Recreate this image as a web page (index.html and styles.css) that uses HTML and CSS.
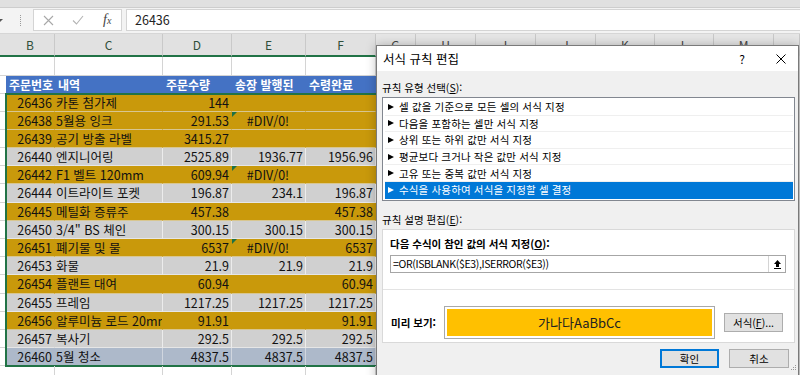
FILE: index.html
```html
<!DOCTYPE html>
<html lang="ko">

<head>
    <meta charset="UTF-8">
    <title>서식 규칙 편집</title>
    <link rel="stylesheet" href="styles.css">
</head>

<body>
    <div class="top-strip"></div>
    <div class="formula-bar">
        <span class="name-arrow"></span>
        <span class="grip"></span>
        <div class="fx-box">
            <svg class="fx-cancel" width="11" height="11" viewBox="0 0 11 11"><path d="M1 1l9 9M10 1l-9 9" stroke="#a8a8a8" stroke-width="1.1" fill="none"/></svg>
            <svg class="fx-enter" width="12" height="10" viewBox="0 0 12 10"><path d="M1 5.5l3.5 3.5L11 1" stroke="#b4b4b4" stroke-width="1.1" fill="none"/></svg>
            <span class="fx-label"><i>f</i><i class="sub">x</i></span>
        </div>
        <div class="formula-input">26436</div>
    </div>

    <!-- column letters -->
    <div class="col-heads">
        <div class="ch sel"></div>
        <div class="ch sel">B</div>
        <div class="ch sel">C</div>
        <div class="ch sel">D</div>
        <div class="ch sel">E</div>
        <div class="ch sel">F</div>
        <div class="ch">G</div>
        <div class="ch">H</div>
        <div class="ch">I</div>
        <div class="ch">J</div>
        <div class="ch">K</div>
        <div class="ch">L</div>
        <div class="ch">M</div>
        <div class="ch"></div>
    </div>

    <div class="sheet">
        <div class="row blank tall">
            <div class="c a"></div><div class="c"></div><div class="c"></div><div class="c"></div><div class="c"></div><div class="c"></div><div class="c"></div>
        </div>
        <div class="row head">
            <div class="c a"></div><div class="c">주문번호</div><div class="c">내역</div><div class="c">주문수량</div><div class="c">송장 발행된</div><div class="c">수령완료</div><div class="c"></div>
        </div>
        <div class="range">
            <div class="row gold">
                <div class="c a"></div><div class="c num active">26436</div><div class="c">카톤 첨가제</div><div class="c num">144</div><div class="c"></div><div class="c"></div><div class="c"></div>
            </div>
            <div class="row gold">
                <div class="c a"></div><div class="c num">26438</div><div class="c">5월용 잉크</div><div class="c num">291.53</div><div class="c err">#DIV/0!</div><div class="c"></div><div class="c"></div>
            </div>
            <div class="row gold">
                <div class="c a"></div><div class="c num">26439</div><div class="c">공기 방출 라벨</div><div class="c num">3415.27</div><div class="c"></div><div class="c"></div><div class="c"></div>
            </div>
            <div class="row gray">
                <div class="c a"></div><div class="c num">26440</div><div class="c">엔지니어링</div><div class="c num">2525.89</div><div class="c num">1936.77</div><div class="c num">1956.96</div><div class="c"></div>
            </div>
            <div class="row gold">
                <div class="c a"></div><div class="c num">26442</div><div class="c">F1 벨트 120mm</div><div class="c num">609.94</div><div class="c err">#DIV/0!</div><div class="c"></div><div class="c"></div>
            </div>
            <div class="row gray">
                <div class="c a"></div><div class="c num">26444</div><div class="c">이트라이트 포켓</div><div class="c num">196.87</div><div class="c num">234.1</div><div class="c num">196.87</div><div class="c"></div>
            </div>
            <div class="row gold">
                <div class="c a"></div><div class="c num">26445</div><div class="c">메틸화 증류주</div><div class="c num">457.38</div><div class="c"></div><div class="c num">457.38</div><div class="c"></div>
            </div>
            <div class="row gray">
                <div class="c a"></div><div class="c num">26450</div><div class="c">3/4" BS 체인</div><div class="c num">300.15</div><div class="c num">300.15</div><div class="c num">300.15</div><div class="c"></div>
            </div>
            <div class="row gold">
                <div class="c a"></div><div class="c num">26451</div><div class="c">폐기물 및 물</div><div class="c num">6537</div><div class="c err">#DIV/0!</div><div class="c num">6537</div><div class="c"></div>
            </div>
            <div class="row gray">
                <div class="c a"></div><div class="c num">26453</div><div class="c">화물</div><div class="c num">21.9</div><div class="c num">21.9</div><div class="c num">21.9</div><div class="c"></div>
            </div>
            <div class="row gold">
                <div class="c a"></div><div class="c num">26454</div><div class="c">플랜트 대여</div><div class="c num">60.94</div><div class="c"></div><div class="c num">60.94</div><div class="c"></div>
            </div>
            <div class="row gray">
                <div class="c a"></div><div class="c num">26455</div><div class="c">프레임</div><div class="c num">1217.25</div><div class="c num">1217.25</div><div class="c num">1217.25</div><div class="c"></div>
            </div>
            <div class="row gold">
                <div class="c a"></div><div class="c num">26456</div><div class="c">알루미늄 로드 20mm</div><div class="c num">91.91</div><div class="c"></div><div class="c num">91.91</div><div class="c"></div>
            </div>
            <div class="row gray">
                <div class="c a"></div><div class="c num">26457</div><div class="c">복사기</div><div class="c num">292.5</div><div class="c num">292.5</div><div class="c num">292.5</div><div class="c"></div>
            </div>
            <div class="row total">
                <div class="c a"></div><div class="c num">26460</div><div class="c">5월 청소</div><div class="c num">4837.5</div><div class="c num">4837.5</div><div class="c num">4837.5</div><div class="c"></div>
            </div>
        </div>
        <div class="row blank">
            <div class="c a"></div><div class="c"></div><div class="c"></div><div class="c"></div><div class="c"></div><div class="c"></div><div class="c"></div>
        </div>
    </div>

    <!-- conditional formatting dialog -->
    <div class="dialog">
        <div class="dlg-title">
            <span class="dlg-name">서식 규칙 편집</span>
            <span class="dlg-help">?</span>
            <svg class="dlg-close" width="10" height="10" viewBox="0 0 10 10"><path d="M0.5 0.5l9 9M9.5 0.5l-9 9" stroke="#000" stroke-width="1" fill="none"/></svg>
        </div>
        <div class="dlg-body">
            <div class="label">규칙 유형 선택(<u>S</u>):</div>
            <ul class="rule-list">
                <li><span class="tri"></span>셀 값을 기준으로 모든 셀의 서식 지정</li>
                <li><span class="tri"></span>다음을 포함하는 셀만 서식 지정</li>
                <li><span class="tri"></span>상위 또는 하위 값만 서식 지정</li>
                <li><span class="tri"></span>평균보다 크거나 작은 값만 서식 지정</li>
                <li><span class="tri"></span>고유 또는 중복 값만 서식 지정</li>
                <li class="selected"><span class="tri"></span>수식을 사용하여 서식을 지정할 셀 결정</li>
            </ul>
            <div class="label second">규칙 설명 편집(<u>E</u>):</div>
            <div class="desc">
                <div class="desc-top">
                    <div class="desc-label">다음 수식이 참인 값의 서식 지정(<u>O</u>):</div>
                    <div class="formula-box">
                        <span class="formula-text">=OR(ISBLANK($E3),ISERROR($E3))</span>
                        <span class="ref-btn">
                            <svg width="7" height="9" viewBox="0 0 7 9"><path d="M3.5 0L7 4H5V7H2V4H0Z" fill="#000"/><rect x="0" y="8" width="7" height="1" fill="#000"/></svg>
                        </span>
                    </div>
                </div>
                <div class="desc-bottom">
                    <span class="preview-label">미리 보기:</span>
                    <div class="preview"><span>가나다AaBbCc</span></div>
                    <button class="btn format-btn">서식(<u>F</u>)...</button>
                </div>
            </div>
            <div class="dlg-buttons">
                <button class="btn default">확인</button>
                <button class="btn cancel">취소</button>
            </div>
        </div>
        <svg class="resize-grip" width="7" height="7" viewBox="0 0 7 7">
            <rect x="5" y="1" width="1" height="1" fill="#999"/>
            <rect x="3" y="3" width="1" height="1" fill="#999"/><rect x="5" y="3" width="1" height="1" fill="#999"/>
            <rect x="1" y="5" width="1" height="1" fill="#999"/><rect x="3" y="5" width="1" height="1" fill="#999"/><rect x="5" y="5" width="1" height="1" fill="#999"/>
        </svg>
    </div>
</body>

</html>
```

FILE: styles.css
```css
* {
    box-sizing: border-box;
}

body {
    margin: 0;
    width: 800px;
    height: 375px;
    overflow: hidden;
    position: relative;
    background: #fff;
    font-family: "Noto Sans CJK KR", "Liberation Sans", sans-serif;
    color: #000;
}

/* formula bar */
.top-strip {
    height: 8px;
    background: #e0e0e0;
    border-bottom: 1px solid #cdcdcd;
}

.formula-bar {
    height: 26px;
    background: #f3f3f3;
    border-bottom: 1px solid #d6d6d6;
    display: flex;
    align-items: flex-start;
    padding-top: 1px;
}

.name-arrow {
    width: 0;
    height: 0;
    margin: 10px 0 0 -3px;
    border-left: 3px solid transparent;
    border-right: 3px solid transparent;
    border-top: 3px solid #555;
}

.grip {
    width: 1px;
    height: 11px;
    margin: 6px 0 0 17px;
    border-left: 1px dotted #9a9a9a;
}

.fx-box {
    width: 89px;
    height: 22px;
    margin-left: 12px;
    background: #fff;
    border: 1px solid #d4d4d4;
    display: flex;
    align-items: center;
}

.fx-cancel {
    margin-left: 9px;
}

.fx-enter {
    margin-left: 18px;
}

.fx-label {
    margin-left: 19px;
    font-family: "Liberation Serif", serif;
    font-size: 14px;
    color: #444;
}

.fx-label .sub {
    font-size: 10px;
}

.formula-input {
    flex: 1;
    height: 22px;
    margin-left: 4px;
    background: #fff;
    border: 1px solid #d4d4d4;
    border-right: none;
    padding-left: 8px;
    font-size: 12.5px;
    line-height: 20px;
    color: #222;
}

/* sheet */
.col-heads {
    display: grid;
    grid-template-columns: 6px 49px 108px 69px 74px 70px 40px 60px 60px 60px 59px 59px 60px 1fr;
    height: 23px;
    background: #e6e6e6;
}

.ch {
    border-right: 1px solid #c9c9c9;
    border-bottom: 2px solid #d4d4d4;
    text-align: center;
    font-size: 12px;
    line-height: 21px;
    color: #444;
}

.ch.sel {
    background: #e1e1e1;
    border-bottom-color: #217346;
    color: #2f4f3b;
}

.ch:first-child {
    border-right: none;
}

.row {
    display: grid;
    grid-template-columns: 6px 49px 108px 69px 74px 70px 1fr;
    height: 18.2px;
}

.row.tall {
    height: 18.5px;
}

.row.head {
    height: 18px;
}

.c {
    position: relative;
    border-right: 1px solid #d4d4d4;
    border-bottom: 1px solid #d4d4d4;
    padding: 0 2px 0 1px;
    font-size: 12.5px;
    line-height: 17px;
    white-space: nowrap;
    overflow: hidden;
    color: #111;
}

.c.a {
    border-right: none;
}

.num {
    text-align: right;
}

.err {
    text-align: center;
    overflow: visible;
}

/* error indicator */
.err::before {
    content: "";
    position: absolute;
    left: 0;
    top: 0;
    border-top: 5px solid #1e7145;
    border-right: 5px solid transparent;
}

.head .c:not(.a):not(:last-child) {
    background: #4472c4;
    border-right-color: transparent;
    border-bottom-color: #4472c4;
    color: #fff;
    font-weight: bold;
    font-size: 12px;
    padding-left: 3px;
}

.gold .c:not(.a):not(:last-child) {
    background: #c9990b;
    border-right-color: transparent;
    border-bottom-color: #d8c690;
}

.gold .c.active {
    background: #ffc000;
}

.gray .c:not(.a):not(:last-child),
.total .c:not(.a):not(:last-child) {
    background: #d0d0d0;
    border-right-color: #ececec;
    border-bottom-color: #e6e6e6;
}

.total .c:not(.a):not(:last-child) {
    background: #adb9ca;
    border-right-color: #d0d6df;
}

.gray .c:nth-child(2),
.total .c:nth-child(2) {
    border-right-color: transparent !important;
}

.range {
    position: relative;
}

/* selection border */
.range::after {
    content: "";
    position: absolute;
    left: 5px;
    top: -1px;
    bottom: -1px;
    width: 373px;
    border: 2px solid #217346;
    pointer-events: none;
}

/* dialog */
.dialog {
    position: absolute;
    left: 376px;
    top: 45px;
    width: 423px;
    height: 340px;
    background: #f0f0f0;
    border: 1px solid #7a7a7a;
    box-shadow: 0 0 10px rgba(0, 0, 0, 0.25);
    font-size: 10.5px;
}

.dlg-title {
    height: 25px;
    background: #fff;
    display: flex;
    align-items: center;
    padding-left: 6px;
    font-size: 12.5px;
}

.dlg-name {
    flex: 1;
}

.dlg-help {
    width: 12px;
    text-align: center;
    font-size: 12px;
    margin-right: 28px;
}

.dlg-close {
    margin-right: 12px;
}

.dlg-body {
    padding: 9px 3px 0 5px;
}

.label {
    height: 16px;
    line-height: 16px;
}

.label.second {
    margin-top: 11px;
}

.rule-list {
    margin: 1px 0 0;
    padding: 1px 1px 0 2px;
    list-style: none;
    height: 104px;
    background: #fff;
    border: 1px solid #828790;
}

.rule-list li {
    height: 16.6px;
    display: flex;
    align-items: center;
    padding-left: 3px;
    border-bottom: 1px solid #efefef;
    letter-spacing: 0.15px;
}

.rule-list li.selected {
    background: #0078d7;
    color: #fff;
    border-bottom-color: #0078d7;
}

.tri {
    width: 0;
    height: 0;
    margin-right: 5px;
    border-left: 6px solid #000;
    border-top: 3.5px solid transparent;
    border-bottom: 3.5px solid transparent;
}

.selected .tri {
    border-left-color: #fff;
}

.desc {
    margin-top: 1px;
    height: 114px;
    background: #fff;
    border: 1px solid #d9d9d9;
}

.desc-top {
    height: 60px;
    padding: 6px 8px 0 7px;
    border-bottom: 1px solid #e3e3e3;
}

.desc-label {
    height: 16px;
    line-height: 16px;
    font-weight: bold;
}

.formula-box {
    margin-top: 3px;
    height: 18px;
    display: flex;
    border: 1px solid #a6a6a6;
}

.formula-text {
    flex: 1;
    padding-left: 2px;
    line-height: 16px;
    letter-spacing: -0.35px;
}

.ref-btn {
    width: 17px;
    display: flex;
    align-items: center;
    justify-content: center;
    border-left: 1px solid #d4d4d4;
}

.desc-bottom {
    height: 53px;
    display: flex;
    align-items: center;
    padding: 12px 0 0 8px;
}

.preview-label {
    width: 53px;
    font-weight: bold;
}

.preview {
    width: 271px;
    height: 33px;
    padding: 2px;
    background: #fff;
    border: 1px solid #a9a9a9;
}

.preview span {
    height: 100%;
    display: flex;
    align-items: center;
    justify-content: center;
    background: #ffc000;
    font-size: 13px;
    color: #222;
}

.btn {
    height: 19px;
    padding: 0;
    background: #e1e1e1;
    border: 1px solid #adadad;
    font-family: inherit;
    font-size: 10.5px;
    line-height: 17px;
    color: #000;
}

.format-btn {
    width: 59px;
    margin-left: 9px;
}

.dlg-buttons {
    display: flex;
    justify-content: flex-end;
    gap: 10px;
    margin-top: 6px;
    padding-right: 6px;
}

.btn.default {
    width: 59px;
    border-color: #0078d7;
    box-shadow: inset 0 0 0 1px #0078d7;
}

.btn.cancel {
    width: 60px;
}

.resize-grip {
    position: absolute;
    left: 413px;
    top: 318px;
}
```
